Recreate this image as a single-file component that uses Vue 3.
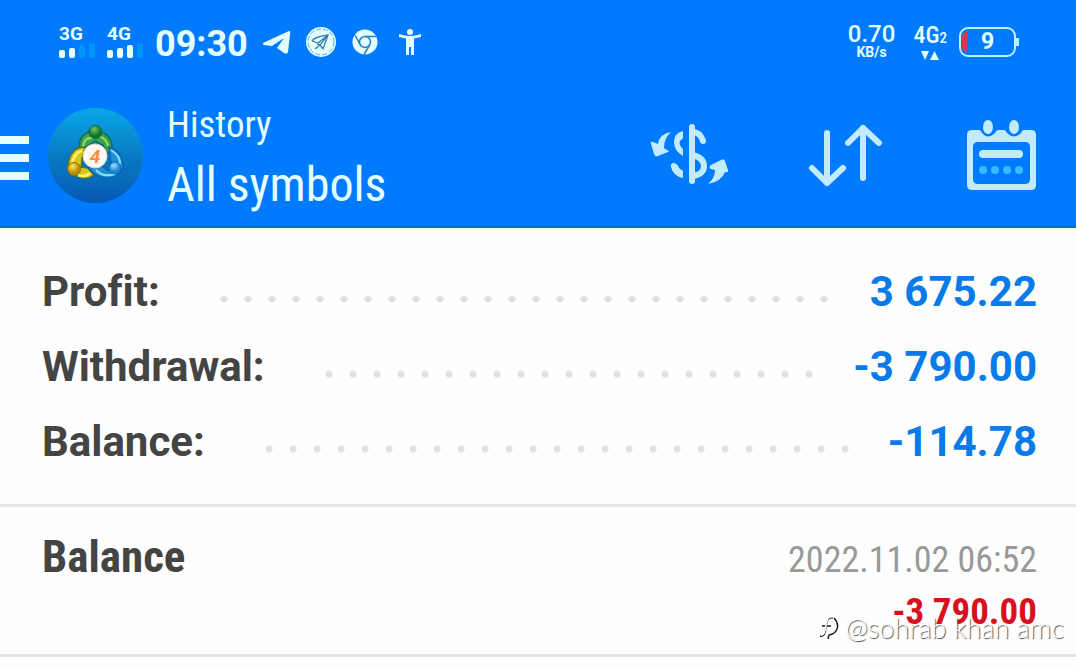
<script setup>
const summary = [
  { label: 'Profit:', value: '3 675.22' },
  { label: 'Withdrawal:', value: '-3 790.00' },
  { label: 'Balance:', value: '-114.78' },
]
const networks = [
  { name: '3G', level: 2 },
  { name: '4G', level: 3 },
]
const barTops = [5, 3, 0, -2]
</script>

<template>
  <div class="screen">
    <header class="top">
      <div class="status">
        <div v-for="n in networks" :key="n.name" class="network">
          <span>{{ n.name }}</span>
          <svg width="36" height="16" viewBox="0 -3 36 16">
            <rect
              v-for="(top, i) in barTops"
              :key="i"
              :x="i * 10"
              :y="top"
              width="6"
              :height="13 - top"
              rx="2"
              :fill="i < n.level ? '#e4ffff' : '#0094ff'"
            />
          </svg>
        </div>
        <time class="clock">09:30</time>
        <div class="notices">
          <svg width="30" height="30" viewBox="0 0 30 30" fill="#e4ffff">
            <path d="M1 16 L27 4 Q29 4 28 7 L26 25 Q25 28 22 26 L15 21 L22 11 L10 19 L2 18 Q0 17 1 16Z" />
          </svg>
          <svg width="30" height="30" viewBox="0 0 30 30">
            <circle cx="15" cy="15" r="15" fill="#e4ffff" />
            <circle cx="15" cy="15" r="13" fill="none" stroke="#5aa9dc" stroke-dasharray="5 2" />
            <path d="M6 14 Q8 10 22 8 L17 22 L14 18 L9 22 M6 14 L12 16 L22 8 L14 18 L11 17" fill="none" stroke="#3b7fae" stroke-width="1.3" />
          </svg>
          <svg width="26" height="26" viewBox="0 0 26 26">
            <circle cx="13" cy="13" r="12.5" fill="#e4ffff" />
            <g fill="none" stroke="#2d7fc0" stroke-width="1.5">
              <circle cx="13" cy="13" r="5.5" />
              <path d="M13 7.5 H24 M8.2 15.8 L3 6 M17.8 15.8 L12 25.5" />
            </g>
          </svg>
          <svg width="24" height="26" viewBox="0 0 24 26" fill="#e4ffff">
            <circle cx="12" cy="3" r="3" />
            <path d="M1 5 Q12 9 23 5 L23 8 L16 9.500 V26 H13 V18 H11 V26 H8 V9.500 L1 8Z" />
          </svg>
        </div>
        <div class="speed">
          <span class="rate">0.70</span>
          <span class="unit">KB/s</span>
        </div>
        <div class="data">
          <span class="kind">4G<small>2</small></span>
          <svg width="18" height="9" viewBox="0 0 18 9" fill="#e4ffff">
            <path d="M0 0H8L4 9Z M9 9H18L13.500 0Z" />
          </svg>
        </div>
        <div class="battery">
          <svg width="60" height="30" viewBox="0 0 60 30">
            <rect x="1" y="1" width="55" height="28" rx="8" fill="none" stroke="#b8f1ff" stroke-width="2" />
            <path d="M58.500 11V19" stroke="#b8f1ff" stroke-width="3" />
            <path d="M8 5V25Q3 24 3 20V10Q3 6 8 5Z" fill="#e0334f" />
          </svg>
          <span class="charge">9</span>
        </div>
      </div>

      <div class="bar">
        <button class="menu" aria-label="Menu"><i></i><i></i><i></i></button>
        <svg class="logo" width="95" height="95" viewBox="0 0 95 95">
          <defs>
            <linearGradient id="disc" x1="0" y1="0" x2="0" y2="1">
              <stop offset="0" stop-color="#08a8e6" />
              <stop offset="0.5" stop-color="#087bc5" />
              <stop offset="1" stop-color="#0759b1" />
            </linearGradient>
            <radialGradient id="green" cx="0.4" cy="0.3"><stop offset="0" stop-color="#70c55c" /><stop offset="1" stop-color="#147431" /></radialGradient>
            <radialGradient id="gold" cx="0.4" cy="0.3"><stop offset="0" stop-color="#ffe85a" /><stop offset="1" stop-color="#b98b06" /></radialGradient>
            <radialGradient id="sky" cx="0.4" cy="0.3"><stop offset="0" stop-color="#9ae2ff" /><stop offset="1" stop-color="#1782cd" /></radialGradient>
          </defs>
          <circle cx="47.500" cy="47.500" r="47.500" fill="url(#disc)" />
          <path d="M32 44 Q29 28 41 24 H53 Q65 28 64 43 L58 45 L55 37 L47 33 L38 39Z" fill="#37a34a" stroke="#116d54" stroke-width="1.5" />
          <path d="M35 39 Q36 29 44 30 M60 38 Q58 30 52 29" fill="none" stroke="#a1d66b" stroke-width="2" />
          <path d="M37 39 Q22 39 20 58 Q20 67 29 68 Q38 73 46 67 L40 60 L33 59 L34 51Z" fill="#d9c51c" stroke="#58751d" stroke-width="1.500" />
          <path d="M34 43 Q27 44 24 55 M30 67 Q37 70 42 65" fill="none" stroke="#fff06a" stroke-width="2.500" />
          <path d="M61 39 Q76 45 75 60 Q70 71 57 70 Q47 68 40 60 L54 58 L60 63 L63 55Z" fill="#218fd4" stroke="#0965aa" stroke-width="1.500" />
          <path d="M63 42 Q72 47 72 56 M48 62 Q55 70 67 66" fill="none" stroke="#8fdcff" stroke-width="2" />
          <circle cx="47.500" cy="24" r="6.500" fill="url(#green)" stroke="#0e6741" />
          <circle cx="26" cy="61" r="6.500" fill="url(#gold)" stroke="#7b720c" />
          <circle cx="67" cy="60" r="6" fill="url(#sky)" stroke="#0c6fb8" />
          <circle cx="47" cy="48" r="12" fill="#fff8f2" stroke="#d3d9ce" />
          <text x="47" y="55" text-anchor="middle" class="logo-num">4</text>
        </svg>
        <div class="titles">
          <span class="section">History</span>
          <h1>All symbols</h1>
        </div>
        <nav class="actions">
          <button aria-label="Filter by symbol">
            <svg width="80" height="72" viewBox="0 0 80 72" fill="#c2ebff">
              <path d="M42 7V61" stroke="#c2ebff" stroke-width="6" stroke-linecap="round" />
              <path d="M33 11 Q24 13 24 22 Q24 31 33 36 V29 Q26 23 33 18Z" />
              <path d="M43 12 Q50 12 53 21 M43 35 Q54 38 54 46 Q54 54 43 56" fill="none" stroke="#c2ebff" stroke-width="6" />
              <circle cx="53" cy="21" r="3" />
              <path d="M21 47 Q20 43 24 43 Q28 44 29 48 L33 51 V58 Q23 56 21 47Z" />
              <path d="M21 12 Q9 14 8 24 L3 22 Q0 21 1 24 L4 34 Q5 37 8 36 L18 32 Q20 31 17 30 L14 28 Q14 18 21 12Z" />
              <path d="M58 64 Q65 58 65 50 L61 49 Q58 47 61 45 L71 40 Q74 38 75 41 L78 50 Q79 53 75 52 Q72 61 58 64Z" />
            </svg>
          </button>
          <button aria-label="Sort">
            <svg width="80" height="72" viewBox="0 0 80 72" fill="none" stroke="#c2ebff" stroke-width="6" stroke-linecap="round" stroke-linejoin="round">
              <path d="M21 13V63M6 48L21 63L37 48M57 58V8M42 23L57 8L73 23" />
            </svg>
          </button>
          <button aria-label="Choose period">
            <svg width="80" height="72" viewBox="0 0 80 72">
              <path fill-rule="evenodd" fill="#c2ebff" d="M10 10H17Q19 10 20 13Q26 20 33 13Q34 10 37 10H42Q44 10 45 13Q52 20 59 13Q60 10 62 10H69Q74 10 74 15V65Q74 70 69 70H10Q5 70 5 65V15Q5 10 10 10Z M16 22Q11 22 11 27V59Q11 64 16 64H63Q68 64 68 59V27Q68 22 63 22Z" />
              <g fill="#c2ebff" stroke="#007bff" stroke-width="4" paint-order="stroke">
                <ellipse cx="26" cy="7" rx="5" ry="7" />
                <ellipse cx="52" cy="7" rx="5" ry="7" />
              </g>
              <path d="M21 34H57" stroke="#c2ebff" stroke-width="8" stroke-linecap="round" />
              <g fill="#36bcff"><circle cx="21" cy="50" r="4" /><circle cx="33" cy="50" r="4" /><circle cx="45" cy="50" r="4" /><circle cx="57" cy="50" r="4" /></g>
            </svg>
          </button>
        </nav>
      </div>
    </header>

    <main>
      <dl class="summary">
        <div v-for="row in summary" :key="row.label" class="line">
          <dt>{{ row.label }}</dt>
          <span class="leader"></span>
          <dd>{{ row.value }}</dd>
        </div>
      </dl>
      <article class="record">
        <h2>Balance</h2>
        <div class="detail">
          <time>2022.11.02 06:52</time>
          <strong>-3 790.00</strong>
        </div>
        <div class="watermark">
          <svg width="20" height="26" viewBox="0 0 20 26" fill="none">
            <path d="M1 21Q5 22 6 17L8 7Q9 2 14 3M3 11H12M15 3Q20 8 18 14Q16 19 10 20L9 24" stroke="#222" stroke-width="1.500" />
            <path d="M2 20Q5 20 6 15L8 6Q9 1 14 2" stroke="#fff" stroke-width="1.500" />
          </svg>
          <span>@sohrab khan amc</span>
        </div>
      </article>
    </main>
  </div>
</template>

<style>
body {
  background: #fefefe;
}
</style>

<style scoped>
.screen {
  font-family: Roboto, "Liberation Sans", sans-serif;
  font-variant-ligatures: none;
  color: #444;
}
.top {
  background: #007bff;
  border-bottom: 2px solid #0869cf;
  color: #e4ffff;
}
.status {
  display: flex;
  align-items: center;
  height: 84px;
  padding: 0 57px 0 59px;
}
.network {
  display: flex;
  flex-direction: column;
  width: 48px;
  font-size: 19px;
  font-weight: 700;
  line-height: 16px;
}
.clock {
  font-size: 36px;
  font-weight: 700;
  line-height: 40px;
  padding-top: 4px;
}
.notices {
  display: flex;
  align-items: center;
  gap: 16px;
  margin-left: 14px;
  margin-right: auto;
}
.notices svg:first-child {
  margin-right: -2px;
}
.notices svg:last-child {
  margin-left: 4px;
}
.speed,
.data {
  display: flex;
  flex-direction: column;
  align-items: center;
  font-weight: 500;
}
.rate {
  font-size: 24px;
  line-height: 20px;
}
.unit {
  font-size: 14px;
  font-weight: 700;
  line-height: 16px;
}
.data {
  margin: 0 12px 0 18px;
  gap: 3px;
}
.kind {
  font-family: "Roboto Condensed", Roboto, sans-serif;
  font-size: 24px;
  line-height: 20px;
}
.kind small {
  font-size: 15px;
}
.battery {
  display: grid;
  place-items: center;
  width: 60px;
}
.battery > * {
  grid-area: 1 / 1;
}
.charge {
  font-size: 23px;
  font-weight: 700;
  line-height: 30px;
  padding-right: 3px;
}
.bar {
  display: flex;
  align-items: center;
  height: 142px;
  padding: 0 34px 0 0;
}
button {
  display: block;
  padding: 0;
  border: 0;
  background: none;
  cursor: pointer;
}
.menu {
  display: flex;
  flex-direction: column;
  gap: 10px;
  width: 29px;
  padding-top: 5px;
}
.menu i {
  height: 8px;
  background: #e4ffff;
}
.logo {
  margin: 0 24px 0 19px;
}
.logo-num {
  font-size: 19px;
  font-style: italic;
  font-weight: 700;
  fill: #f58b42;
}
.titles {
  font-family: "Roboto Condensed", Roboto, sans-serif;
  margin-right: auto;
}
.section {
  display: block;
  font-size: 37px;
  line-height: 60px;
}
h1 {
  margin: 0;
  font-size: 48px;
  font-weight: 400;
  line-height: 60px;
}
.actions {
  display: flex;
  gap: 76px;
  padding-top: 2px;
}
svg {
  display: block;
  flex: none;
}
.summary {
  margin: 0;
  padding: 26px 39px 25px 42px;
  border-bottom: 3px solid #e5e5e5;
}
.line {
  display: flex;
  height: 75px;
  font-size: 42px;
  font-weight: 700;
  line-height: 75px;
}
dd {
  margin: 0;
  color: #087be8;
}
.leader {
  flex: 1;
  height: 8px;
  margin: 41px 34px 0 60px;
  background: radial-gradient(circle at 4px 4px, #e2e2e2 3px, transparent 4px) 0 0 / 24px 8px repeat-x;
}
.record {
  position: relative;
  display: flex;
  justify-content: space-between;
  height: 147px;
  padding: 0 39px 0 42px;
  border-bottom: 3px solid #e5e5e5;
  font-family: "Roboto Condensed", Roboto, sans-serif;
}
h2 {
  margin: 0;
  font-size: 45px;
  font-weight: 700;
  line-height: 100px;
}
.detail {
  display: flex;
  flex-direction: column;
  padding-top: 28px;
  text-align: right;
  line-height: 51px;
}
.detail time {
  font-size: 36px;
  color: #999;
}
.detail strong {
  font-size: 37px;
  color: #d9101d;
}
.watermark {
  position: absolute;
  right: 12px;
  bottom: 9px;
  display: flex;
  align-items: center;
  gap: 6px;
  font-family: Lato, sans-serif;
  font-size: 27px;
  font-weight: 300;
  line-height: 34px;
  color: #fff;
  text-shadow: 1px 1px 1px #444;
}
</style>
